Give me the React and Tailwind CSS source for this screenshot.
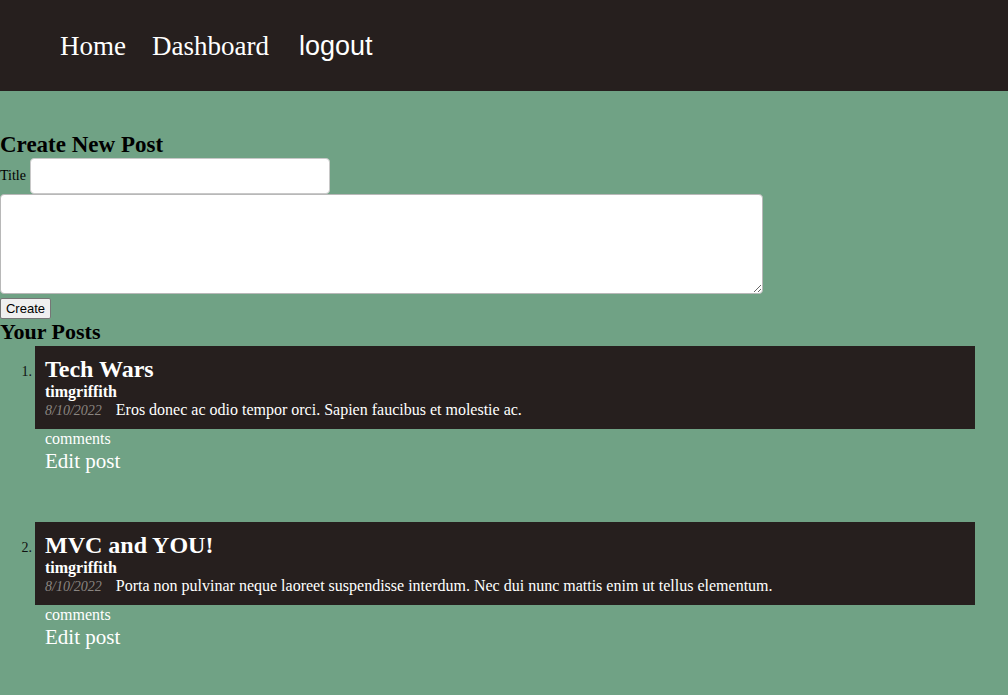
import React from "react";

const serif = { fontFamily: '"Liberation Serif", "Times New Roman", serif' };

function Post({ n, title, body, last }) {
  return (
    <div className={`flex items-start ${last ? "" : "mb-[48px]"}`}>
      <span className="w-[35px] pr-[3px] text-right text-[14px] leading-[16px] mt-[18px] text-[#111]">
        {n}.
      </span>
      <div className="flex-1 mr-[33px]">
        <div className="bg-[#261f1e] text-white pl-[10px] pt-[9px] pb-[9px]">
          <div className="text-[24px] leading-[28px] font-bold">{title}</div>
          <div className="text-[16px] leading-[18px] font-bold">timgriffith</div>
          <div className="text-[16px] leading-[18px] flex items-baseline">
            <span className="italic text-[14px] text-[#8a8580] mr-[14px]">8/10/2022</span>
            <span>{body}</span>
          </div>
        </div>
        <div className="pl-[10px] text-white">
          <div className="text-[16px] leading-[18px] mt-[1px]">comments</div>
          <div className="text-[21px] leading-[25px] mt-[1px]">Edit post</div>
        </div>
      </div>
    </div>
  );
}

export default function App() {
  return (
    <div className="min-h-[695px] bg-[#70a285]" style={serif}>
      <header className="h-[91px] bg-[#261f1e] flex items-center pl-[60px] text-white">
        <a className="text-[27px] leading-[32px] mr-[26px]">Home</a>
        <a className="text-[27px] leading-[32px] mr-[30px]">Dashboard</a>
        <a
          className="text-[27px] leading-[32px]"
          style={{ fontFamily: '"Liberation Sans", Arial, sans-serif' }}
        >
          logout
        </a>
      </header>
      <main className="pt-[40px]">
        <h2 className="text-[23px] leading-[27px] font-bold text-black">Create New Post</h2>
        <div className="flex items-center">
          <label className="text-[14px] leading-[16px] text-black mr-[4px]">Title</label>
          <input className="w-[300px] h-[36px] bg-white rounded-[4px] border border-[#c8c8c8]" />
        </div>
        <textarea className="block w-[763px] h-[100px] bg-white rounded-[4px] border border-[#b8b8b8] resize" />
        <button
          className="mt-[4px] h-[21px] px-[2px] w-[51px] text-[13px] leading-[15px] text-black bg-[#efefef] border border-[#767676] rounded-[2px]"
          style={{ fontFamily: '"Liberation Sans", Arial, sans-serif' }}
        >
          Create
        </button>
        <h2 className="text-[22px] leading-[24px] font-bold text-black">Your Posts</h2>
        <div className="mt-[2px]">
          <Post
            n={1}
            title="Tech Wars"
            body="Eros donec ac odio tempor orci. Sapien faucibus et molestie ac."
          />
          <Post
            n={2}
            title="MVC and YOU!"
            body="Porta non pulvinar neque laoreet suspendisse interdum. Nec dui nunc mattis enim ut tellus elementum."
            last
          />
        </div>
      </main>
    </div>
  );
}
